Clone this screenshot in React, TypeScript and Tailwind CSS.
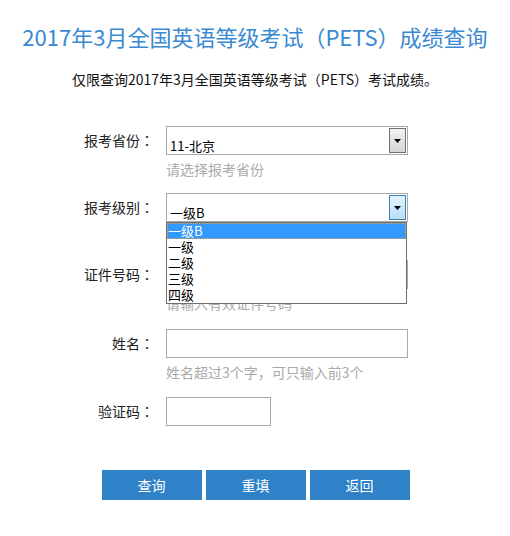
const font = { fontFamily: '"Microsoft YaHei", "Noto Sans CJK SC", sans-serif' };
const tc = { fontFamily: '"Noto Sans CJK TC", sans-serif' };

function Arrow({ focus }: { focus?: boolean }) {
  return (
    <div
      className={
        'absolute right-[1px] top-[1px] bottom-[1px] w-[17px] flex items-center justify-center border ' +
        (focus
          ? 'border-[#3c7fb1] bg-gradient-to-b from-[#e5f4fc] to-[#b6dff7]'
          : 'border-[#707070] bg-gradient-to-b from-[#f2f2f2] to-[#d4d4d4]')
      }
    >
      <svg width="7" height="4" viewBox="0 0 7 4">
        <path d="M0 0H7L3.5 4Z" fill="#000" />
      </svg>
    </div>
  );
}

function Select({ value, focus }: { value: string; focus?: boolean }) {
  return (
    <div className="relative w-[242px] h-[29px] border border-[#a9a9a9] bg-white">
      <span className="absolute left-[3px] top-[11px] text-[13px] leading-[16px] text-black">{value}</span>
      <Arrow focus={focus} />
    </div>
  );
}

function Row({
  label,
  children,
  hint,
  className,
}: {
  label: string;
  children: React.ReactNode;
  hint?: string;
  className?: string;
}) {
  return (
    <div className={'flex ' + (className ?? '')}>
      <div className="w-[154px] h-[29px] flex items-center justify-end text-[14px] text-[#222]">
        {label}
        <span style={tc}>：</span>
      </div>
      <div className="ml-[12px]">
        {children}
        {hint && <div className="mt-[5px] h-[18px] leading-[18px] text-[14px] text-[#aaa]">{hint}</div>}
      </div>
    </div>
  );
}

export default function App() {
  const options = ['一级B', '一级', '二级', '三级', '四级'];
  return (
    <div className="w-[510px] h-[536px] bg-white relative" style={font}>
      <h1 className="pt-[21px] text-center text-[22px] leading-[30px] text-[#3a89d2]">
        2017年3月全国英语等级考试（PETS）成绩查询
      </h1>
      <p className="mt-[19px] text-center text-[14px] leading-[18px] text-[#111]">
        仅限查询2017年3月全国英语等级考试（PETS）考试成绩。
      </p>

      <div className="mt-[38px]">
        <Row label="报考省份" hint="请选择报考省份">
          <Select value="11-北京" />
        </Row>
        <Row label="报考级别" className="mt-[15px]">
          <Select value="一级B" focus />
        </Row>
        <Row label="证件号码" hint="请输入有效证件号码" className="mt-[38px]">
          <div className="w-[242px] h-[29px] border border-[#a9a9a9]" />
        </Row>
        <Row label="姓名" hint="姓名超过3个字，可只输入前3个" className="mt-[17px]">
          <div className="w-[242px] h-[29px] border border-[#a9a9a9]" />
        </Row>
        <Row label="验证码" className="mt-[16px]">
          <div className="w-[105px] h-[29px] border border-[#a9a9a9]" />
        </Row>
      </div>

      <div className="mt-[44px] flex justify-center gap-[4px] pl-[1px]">
        {['查询', '重填', '返回'].map((t) => (
          <button key={t} className="w-[100px] h-[30px] bg-[#2f82c8] text-white text-[14px]">
            {t}
          </button>
        ))}
      </div>

      <div className="absolute left-[166px] top-[222px] w-[241px] border border-[#6f6f6f] bg-white text-[13px] leading-[16px] text-black">
        {options.map((o, i) => (
          <div
            key={o}
            className={
              'h-[16px] pl-[1px] ' +
              (i === 0 ? 'bg-[#3399ff] text-white outline outline-1 outline-dotted outline-[#e8a33c] -outline-offset-1' : '')
            }
          >
            {o}
          </div>
        ))}
      </div>
    </div>
  );
}
